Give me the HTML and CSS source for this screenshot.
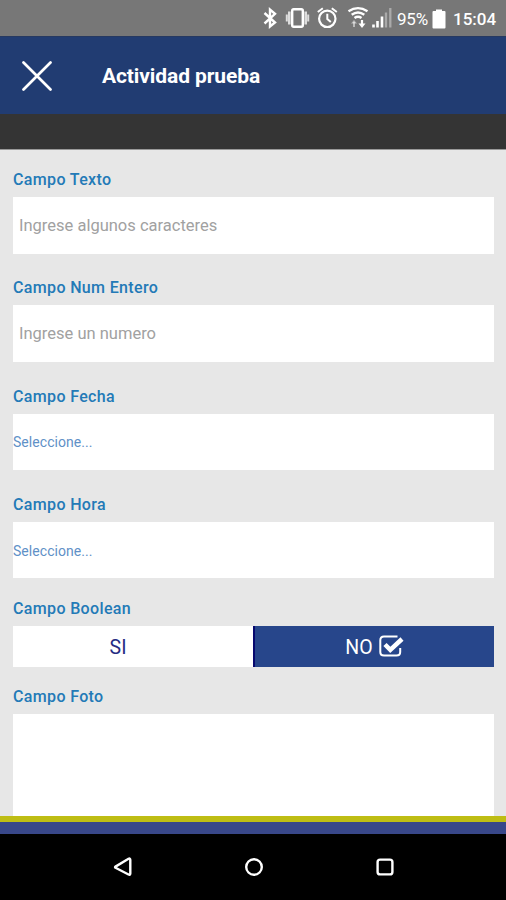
FILE: index.html
```html
<!DOCTYPE html>
<html lang="es">
<head>
<meta charset="utf-8">
<title>Actividad prueba</title>
<link rel="stylesheet" href="styles.css">
</head>
<body>
<div class="screen">
  <div class="status">
    <svg class="status-icons" width="134" height="36" viewBox="260 0 134 36" fill="none" stroke="#fff">
      <path d="M264.500 13 275 22.500 270 26.500V9.500L275 13.800 264.500 23.500" stroke-width="2.400"/>
      <rect x="292.2" y="9.2" width="10.600" height="17.600" rx="1.500" stroke-width="2.400"/>
      <path d="M289.300 11.500v13M305.700 11.500v13" stroke-width="2.600" opacity=".75"/>
      <path d="M286.800 14.500v7M308.200 14.500v7" stroke-width="2" opacity=".75"/>
      <circle cx="327.300" cy="18.800" r="8.200" stroke-width="2.200"/>
      <path d="M327.300 13.800v5.200l3.500 3M317.800 12l5-3.700M336.800 12l-5-3.700" stroke-width="2"/>
      <path d="M348.500 11.200q9.500-6.200 19 0M351.700 14.700q6.300-4.600 12.600 0M354.500 18q3.500-2.400 7 0" stroke-width="2.400"/>
      <path d="M354 27v-5" stroke-width="2" opacity=".5"/>
      <path d="M351 23.500l3-3.500 3 3.500z" fill="#fff" stroke="none" opacity=".5"/>
      <path d="M362 20v5" stroke-width="2.200"/>
      <path d="M358.500 23.500h7l-3.500 4.500z" fill="#fff" stroke="none"/>
      <path d="M373.500 24.500v3M377.500 21v6.500M382 16.500v11" stroke-width="2.600"/>
      <path d="M386 12.500v15M390.300 8v19.500" stroke-width="2.300" opacity=".38"/>
    </svg>
    <span class="percent">95%</span>
    <svg class="battery" width="14" height="20" viewBox="0 0 14 20"><path d="M1.500 2H4V.5h6V2h2.500q1 0 1 1v15.500q0 1-1 1h-11q-1 0-1-1V3q0-1 1-1z" fill="#fff"/></svg>
    <span class="clock">15:04</span>
  </div>
  <header class="header">
    <svg class="close" width="30" height="30" viewBox="0 0 30 30"><path d="M1.500 1.500l27 27M28.500 1.500l-27 27" stroke="#fff" stroke-width="2.700" stroke-linecap="round"/></svg>
    <h1 class="title">Actividad prueba</h1>
  </header>
  <div class="strip"></div>
  <main class="form">
    <div class="field"><span class="label">Campo Texto</span><div class="input">Ingrese algunos caracteres</div></div>
    <div class="field"><span class="label">Campo Num Entero</span><div class="input">Ingrese un numero</div></div>
    <div class="field"><span class="label">Campo Fecha</span><div class="input select">Seleccione...</div></div>
    <div class="field hora"><span class="label">Campo Hora</span><div class="input select">Seleccione...</div></div>
    <div class="field bool"><span class="label">Campo Boolean</span>
      <div class="toggle">
        <div class="option">SI</div>
        <div class="option on"><span>NO</span>
          <svg class="check" width="25" height="22" viewBox="0 0 25 22" fill="none" stroke="#fff"><path d="M18.500 1.600H5Q1.300 1.600 1.300 5.300V17Q1.300 20.500 5 20.500H17.500Q21.200 20.500 21.200 17V13" stroke-width="2"/><path d="M6 9.500l5.300 5.300L23 4" stroke-width="4.500"/></svg>
        </div>
      </div>
    </div>
    <div class="field foto"><span class="label">Campo Foto</span><div class="photo"></div></div>
  </main>
  <div class="bar"></div>
  <nav class="nav">
    <svg width="20" height="22" viewBox="0 0 20 22"><path d="M2.500 10.600 15.500 2.800Q17.300 2 17.300 4V17.500Q17.300 19.300 15.500 18.500L2.500 11.700Q1.600 11.200 2.500 10.600Z"/></svg>
    <svg width="20" height="22" viewBox="0 0 20 22"><circle cx="10" cy="11" r="7.800"/></svg>
    <svg width="20" height="22" viewBox="0 0 20 22"><rect x="2.600" y="3.600" width="14.800" height="14.800" rx="2.500"/></svg>
  </nav>
</div>
</body>
</html>
```
FILE: styles.css
```css
* { box-sizing: border-box; }
body { margin: 0; font-family: Roboto, sans-serif; }
.screen { width: 506px; height: 900px; display: flex; flex-direction: column; overflow: hidden; background: #e7e7e7; }
.status { height: 36px; flex: none; display: flex; align-items: center; padding-left: 260px; background: #777; color: #fff; }
.status-icons { flex: none; }
.percent { width: 38px; padding-left: 3px; font-size: 17px; line-height: 36px; padding-top: 2px; letter-spacing: -0.2px; }
.battery { margin: 1px 7px 0 0; flex: none; }
.clock { font-size: 17px; font-weight: 500; line-height: 36px; padding-top: 2px; }
.header { height: 78px; flex: none; display: flex; align-items: center; padding-left: 22px; background: #213c72; border-top: 1px solid #263961; }
.close { flex: none; }
.title { margin: 0 0 0 50px; font-size: 21px; font-weight: 700; color: #fff; letter-spacing: -0.1px; line-height: 30px; }
.strip { height: 36px; flex: none; background: #343434; border-bottom: 1px solid #999; }
.form { flex: 1; min-height: 0; overflow: hidden; padding: 20px 12px 0 13px; }
.field { margin-bottom: 24px; height: 84.333px; }
.label { display: block; height: 27px; line-height: 20px; font-size: 16px; font-weight: 500; color: #237ab7; letter-spacing: 0.35px; }
.input { height: 56.500px; display: flex; align-items: center; padding-left: 6px; background: #fff; color: #a1a1a1; font-size: 16.500px; }
.select { padding-left: 0; padding-top: 1px; font-size: 14px; color: #5f91c7; letter-spacing: 0.05px; }
.field.hora { margin-bottom: 20px; }
.field.bool { height: 68px; margin-bottom: 20px; }
.toggle { display: grid; grid-template-columns: 240px 241px; height: 41px; background: #fff; }
.option { display: flex; align-items: center; justify-content: center; font-size: 19.500px; color: #262c83; padding-right: 30px; padding-top: 1px; }
.option.on { background: #27468b; color: #fff; border-left: 2px solid #07086f; padding: 1px 0 0; gap: 6px; }
.check { margin-top: -2px; }
.field.foto { height: 140px; margin: 0; }
.photo { height: 112px; background: #fff; }
.bar { height: 18px; flex: none; background: #384789; border-top: 6px solid #bebd14; }
.nav { height: 66px; flex: none; display: flex; justify-content: center; align-items: center; gap: 111px; padding-left: 1px; background: #000; }
.nav svg { fill: none; stroke: #fff; stroke-width: 2.400px; }
```
